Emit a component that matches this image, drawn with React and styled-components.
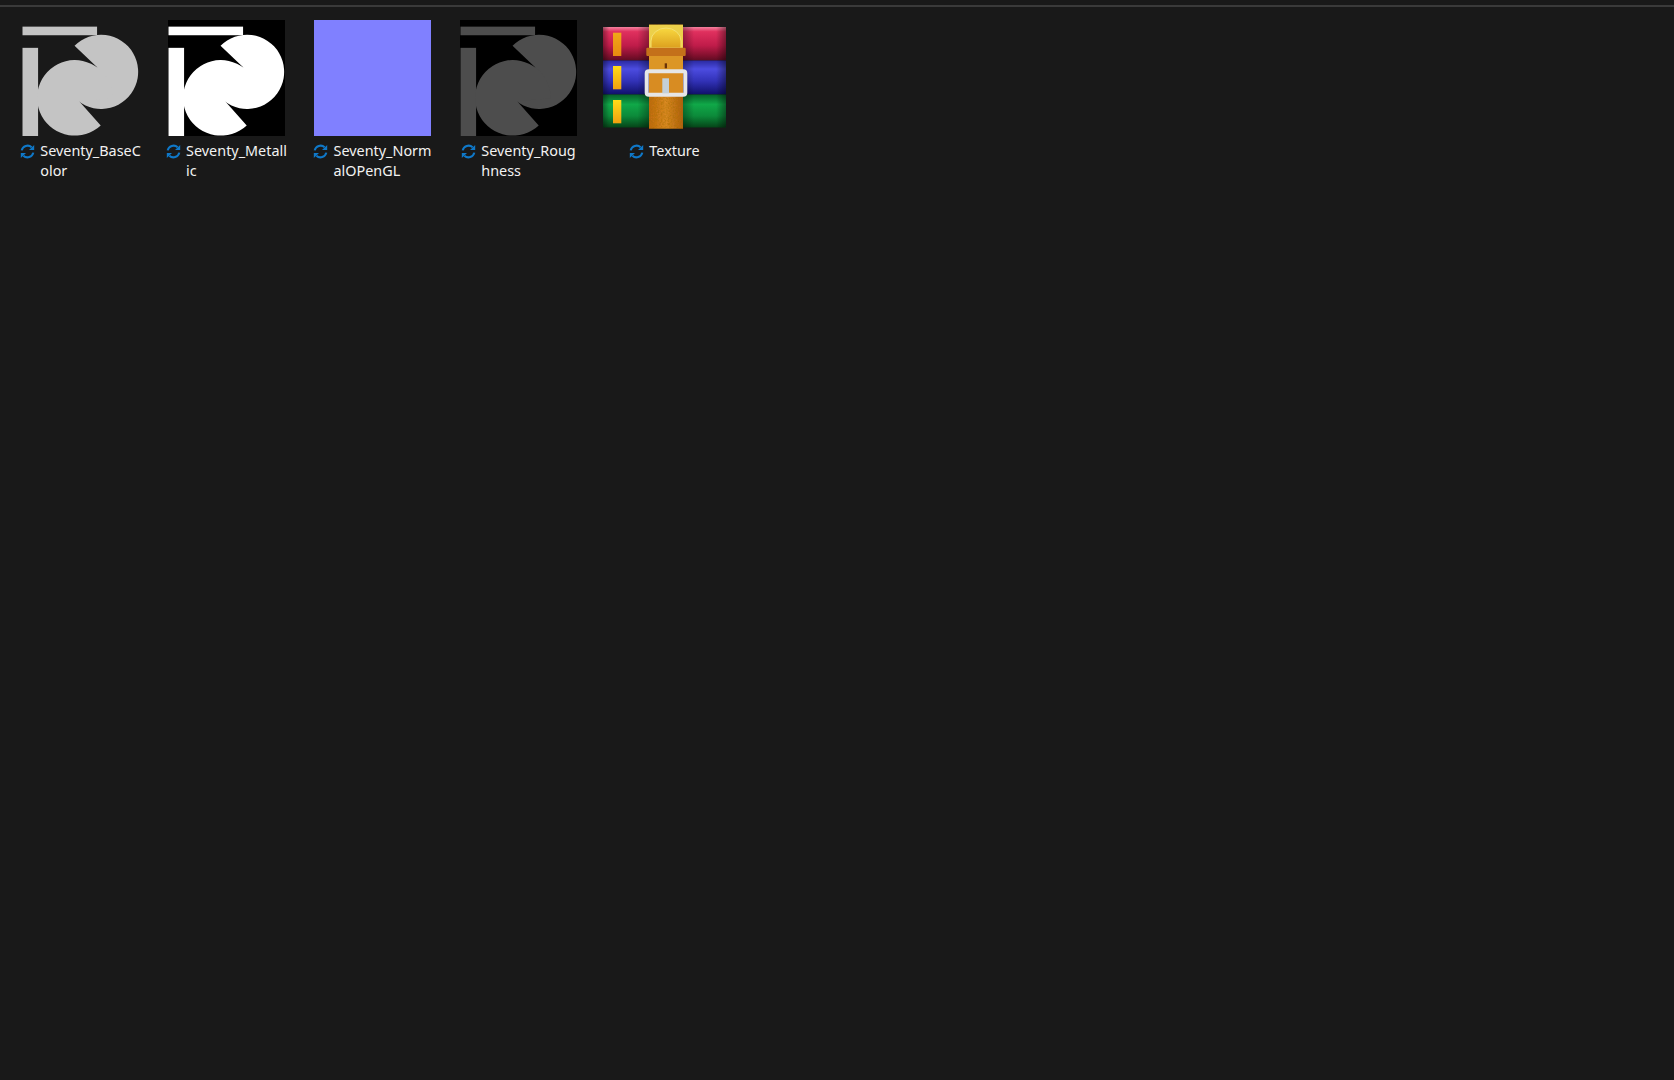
import React from "react";
import styled, { createGlobalStyle } from "styled-components";

const GlobalStyle = createGlobalStyle`
  html, body {
    margin: 0;
    height: 100%;
    background: #191919;
  }
  #root {
    min-height: 100%;
  }
`;

const Page = styled.div`
  min-height: 1080px;
  background: #191919;
  font-family: "Noto Sans", "Open Sans", "Liberation Sans", sans-serif;
`;

const TopLine = styled.div`
  height: 5px;
  border-bottom: 2px solid #3a3a3a;
`;

const FileGrid = styled.div`
  display: flex;
  align-items: flex-start;
  padding: 13px 0 0 7.5px;
`;

const FileCell = styled.div`
  width: 146px;
  display: flex;
  flex-direction: column;
  align-items: center;
`;

const Thumb = styled.div`
  width: 117px;
  height: 116px;
  display: flex;
  align-items: center;
  justify-content: center;
  background: ${p => p.$bg || "transparent"};
`;

const ThumbSvg = styled.svg`
  display: block;
  width: 117px;
  height: 116px;
  flex: none;
  filter: blur(0.35px);
`;

const ArchiveSvg = styled.svg`
  display: block;
  width: 124px;
  height: 112px;
  flex: none;
  margin-left: 1px;
  filter: blur(0.55px);
`;

const Label = styled.div`
  display: flex;
  align-items: flex-start;
  gap: 5px;
  margin-top: 5px;
  color: #f2f2f2;
  font-size: 14.4px;
  line-height: 19.5px;
`;

const SyncIcon = styled.svg`
  display: block;
  flex: none;
  width: 15px;
  height: 15px;
  margin-top: 3px;
`;

const LineText = styled.div`
  white-space: nowrap;
`;

const files = [
  { lines: ["Seventy_BaseC", "olor"], fill: "#c4c4c4" },
  { lines: ["Seventy_Metall", "ic"], fill: "#ffffff", bg: "#000000" },
  { lines: ["Seventy_Norm", "alOPenGL"], bg: "#8080ff" },
  { lines: ["Seventy_Roug", "hness"], fill: "#4d4d4d", bg: "#000000" },
  { lines: ["Texture"], archive: true }
];

// the seventy mark, traced off the texture thumbnails
function SeventyMark({ fill }) {
  return (
    <ThumbSvg viewBox="0 0 350 350">
      <g fill={fill}>
        <rect x="0" y="20" width="225" height="26" />
        <rect x="0" y="84" width="47" height="266" />
        <path d="M226 143 L157 78 A112 112 0 1 1 125 155 Z" />
        <path d="M171 245 L236 318 A114 114 0 1 1 272 236 Z" />
      </g>
    </ThumbSvg>
  );
}

function ArchiveIcon() {
  return (
    <ArchiveSvg viewBox="0 0 124 112">
      <defs>
        <linearGradient id="redBook" x1="0" y1="0" x2="0" y2="1">
          <stop offset="0" stopColor="#f4829f" />
          <stop offset="0.14" stopColor="#e0305e" />
          <stop offset="0.55" stopColor="#c01c4a" />
          <stop offset="0.85" stopColor="#82102e" />
          <stop offset="1" stopColor="#5e0c22" />
        </linearGradient>
        <linearGradient id="blueBook" x1="0" y1="0" x2="0" y2="1">
          <stop offset="0" stopColor="#2a2aa0" />
          <stop offset="0.25" stopColor="#4c4ce0" />
          <stop offset="0.6" stopColor="#3232b8" />
          <stop offset="1" stopColor="#10106a" />
        </linearGradient>
        <linearGradient id="greenBook" x1="0" y1="0" x2="0" y2="1">
          <stop offset="0" stopColor="#07602a" />
          <stop offset="0.3" stopColor="#10a848" />
          <stop offset="0.65" stopColor="#0c8a3a" />
          <stop offset="1" stopColor="#054418" />
        </linearGradient>
        <linearGradient id="bookEdges" x1="0" y1="0" x2="1" y2="0">
          <stop offset="0" stopColor="#000" stopOpacity="0.35" />
          <stop offset="0.05" stopColor="#000" stopOpacity="0" />
          <stop offset="0.28" stopColor="#000" stopOpacity="0" />
          <stop offset="0.37" stopColor="#000" stopOpacity="0.3" />
          <stop offset="0.65" stopColor="#000" stopOpacity="0.3" />
          <stop offset="0.74" stopColor="#000" stopOpacity="0" />
          <stop offset="0.92" stopColor="#000" stopOpacity="0" />
          <stop offset="1" stopColor="#000" stopOpacity="0.4" />
        </linearGradient>
        <linearGradient id="tag" x1="0" y1="0" x2="0" y2="1">
          <stop offset="0" stopColor="#f0a818" />
          <stop offset="1" stopColor="#e88a10" />
        </linearGradient>
        <linearGradient id="tagBright" x1="0" y1="0" x2="0" y2="1">
          <stop offset="0" stopColor="#ffdc18" />
          <stop offset="1" stopColor="#f0a010" />
        </linearGradient>
        <linearGradient id="strap" x1="0" y1="0" x2="1" y2="0">
          <stop offset="0" stopColor="#c06a12" />
          <stop offset="0.5" stopColor="#da8a22" />
          <stop offset="1" stopColor="#b06012" />
        </linearGradient>
        <linearGradient id="dome" x1="0" y1="0" x2="0" y2="1">
          <stop offset="0" stopColor="#f8d840" />
          <stop offset="1" stopColor="#dca01e" />
        </linearGradient>
        <filter id="leather" x="0" y="0" width="1" height="1">
          <feTurbulence type="fractalNoise" baseFrequency="0.6" numOctaves="2" seed="4" />
          <feColorMatrix values="0 0 0 0 0.35  0 0 0 0 0.15  0 0 0 0 0  0 0 0 1.1 -0.35" />
          <feComposite in2="SourceGraphic" operator="in" />
          <feMerge>
            <feMergeNode in="SourceGraphic" />
            <feMergeNode />
          </feMerge>
        </filter>
      </defs>

      <rect x="0" y="5" width="123" height="33.5" fill="url(#redBook)" />
      <rect x="0" y="38.5" width="123" height="34" fill="url(#blueBook)" />
      <rect x="0" y="72.5" width="123" height="33" fill="url(#greenBook)" />
      <rect x="0" y="5" width="123" height="100.5" fill="url(#bookEdges)" />

      <rect x="10" y="10.7" width="8.3" height="23.3" fill="url(#tag)" />
      <rect x="10" y="44" width="8.3" height="23.3" fill="url(#tagBright)" />
      <rect x="10" y="78" width="8.3" height="23.3" fill="url(#tagBright)" />

      <rect x="46" y="2.7" width="34" height="104" fill="url(#strap)" filter="url(#leather)" />
      <rect x="46" y="2.7" width="34" height="24" fill="#ecd04a" />
      <path d="M48 26 V19 A15 13 0 0 1 78 19 V26 Z" fill="url(#dome)" stroke="#f4e070" strokeWidth="1" />
      <rect x="43.3" y="25.7" width="39.4" height="8.3" rx="1" fill="#c4701a" />
      <rect x="46" y="34" width="34" height="15" fill="#dc9626" />
      <rect x="61.7" y="41.3" width="2.3" height="5" fill="#6a3208" />
      <rect x="46" y="50" width="34" height="22" fill="#d88c22" />
      <rect x="43.7" y="49.2" width="38.6" height="23.6" rx="2" fill="none" stroke="#e6e6e6" strokeWidth="4" />
      <rect x="59.3" y="56.3" width="6.7" height="15" fill="#c4d0d8" />
    </ArchiveSvg>
  );
}

function SyncBadge() {
  return (
    <SyncIcon viewBox="0 0 15 15">
      <g fill="none" stroke="#0f78c8" strokeWidth="2.1">
        <path d="M1.7 6.4 A6 6 0 0 1 11.6 3.2" />
        <path d="M13.3 8.6 A6 6 0 0 1 3.4 11.8" />
      </g>
      <path d="M9 6 H14.2 V1 Z" fill="#0f78c8" />
      <path d="M6 9 H0.8 V14 Z" fill="#0f78c8" />
    </SyncIcon>
  );
}

export default function App() {
  return (
    <Page>
      <GlobalStyle />
      <TopLine />
      <FileGrid>
        {files.map(file => (
          <FileCell key={file.lines.join("")}>
            <Thumb $bg={file.bg}>
              {file.archive && <ArchiveIcon />}
              {file.fill && <SeventyMark fill={file.fill} />}
            </Thumb>
            <Label>
              <SyncBadge />
              <div>
                {file.lines.map(line => (
                  <LineText key={line}>{line}</LineText>
                ))}
              </div>
            </Label>
          </FileCell>
        ))}
      </FileGrid>
    </Page>
  );
}
